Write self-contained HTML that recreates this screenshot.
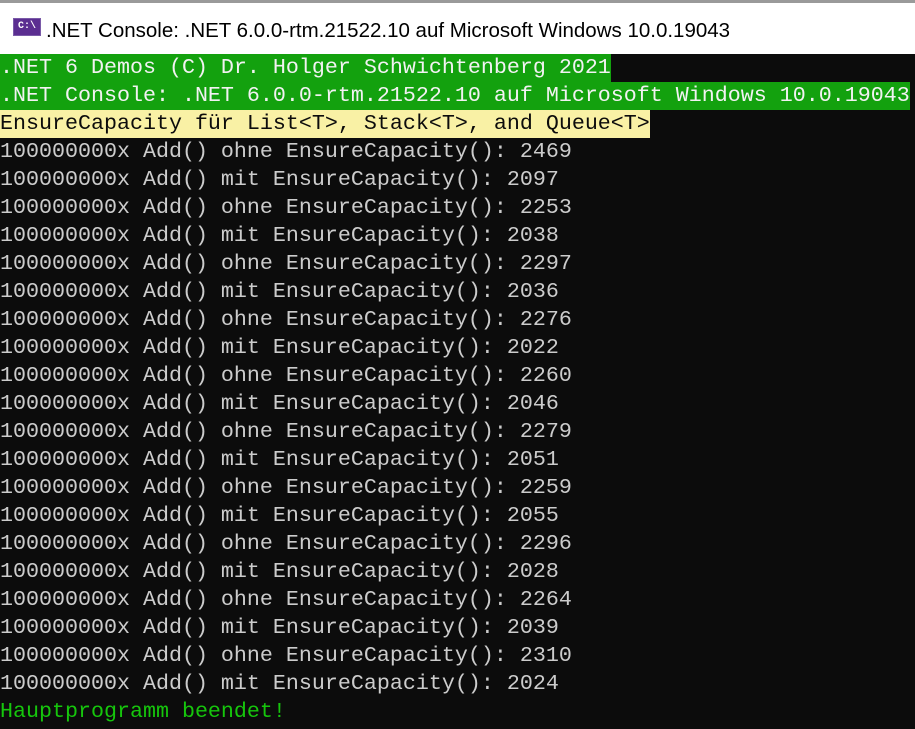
<!DOCTYPE html>
<html><head><meta charset="utf-8"><style>
html,body{margin:0;padding:0;width:915px;height:729px;overflow:hidden;background:#0c0c0c}
.tb{position:absolute;left:0;top:0;width:915px;height:54px;background:#fff;border-top:3px solid #9a9a9a;box-sizing:border-box}
.icon{position:absolute;left:13px;top:15px;width:28px;height:18px;background:#5b2e91;border:1px solid #7a5aa8;box-sizing:border-box;color:#fff;font:bold 10px "Liberation Mono",monospace;line-height:16px;text-align:center}
.title{position:absolute;left:46px;top:16px;font:20.5px "Liberation Sans",sans-serif;color:#000;white-space:nowrap}
.con{position:absolute;left:0;top:54px;width:915px;font-family:"Liberation Mono",monospace;font-size:21.67px;line-height:28px;color:#cccccc}
.con div{height:28px;white-space:pre}
.g,.y{display:inline-block;height:28px;vertical-align:top}
.g{background:#13a10e;color:#f2f2f2}
.y{background:#f9f1a5;color:#0c0c0c}
.gt{color:#16c60c}
</style></head><body>
<div class="tb"><div class="icon">C:\</div><div class="title">.NET Console: .NET 6.0.0-rtm.21522.10 auf Microsoft Windows 10.0.19043</div></div>
<div class="con"><div><span class="g">.NET 6 Demos (C) Dr. Holger Schwichtenberg 2021</span></div><div><span class="g">.NET Console: .NET 6.0.0-rtm.21522.10 auf Microsoft Windows 10.0.19043</span></div><div><span class="y">EnsureCapacity für List&lt;T&gt;, Stack&lt;T&gt;, and Queue&lt;T&gt;</span></div><div>100000000x Add() ohne EnsureCapacity(): 2469</div><div>100000000x Add() mit EnsureCapacity(): 2097</div><div>100000000x Add() ohne EnsureCapacity(): 2253</div><div>100000000x Add() mit EnsureCapacity(): 2038</div><div>100000000x Add() ohne EnsureCapacity(): 2297</div><div>100000000x Add() mit EnsureCapacity(): 2036</div><div>100000000x Add() ohne EnsureCapacity(): 2276</div><div>100000000x Add() mit EnsureCapacity(): 2022</div><div>100000000x Add() ohne EnsureCapacity(): 2260</div><div>100000000x Add() mit EnsureCapacity(): 2046</div><div>100000000x Add() ohne EnsureCapacity(): 2279</div><div>100000000x Add() mit EnsureCapacity(): 2051</div><div>100000000x Add() ohne EnsureCapacity(): 2259</div><div>100000000x Add() mit EnsureCapacity(): 2055</div><div>100000000x Add() ohne EnsureCapacity(): 2296</div><div>100000000x Add() mit EnsureCapacity(): 2028</div><div>100000000x Add() ohne EnsureCapacity(): 2264</div><div>100000000x Add() mit EnsureCapacity(): 2039</div><div>100000000x Add() ohne EnsureCapacity(): 2310</div><div>100000000x Add() mit EnsureCapacity(): 2024</div><div class="gt">Hauptprogramm beendet!</div></div>
</body></html>
